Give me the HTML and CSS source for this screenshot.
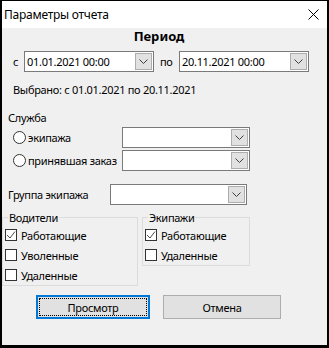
FILE: index.html
```html
<!DOCTYPE html>
<html lang="ru">
<head>
<meta charset="utf-8">
<title>Параметры отчета</title>
<link rel="stylesheet" href="styles.css">
</head>
<body>
<div class="window">
  <div class="titlebar">
    <span class="title">Параметры отчета</span>
    <svg class="close" width="11" height="11" viewBox="0 0 11 11"><path d="M0.5 0.5 L10.5 10.5 M10.5 0.5 L0.5 10.5" stroke="#000" stroke-width="1" fill="none"/></svg>
  </div>
  <div class="content">
    <div class="heading">Период</div>
    <div class="date-row">
      <span class="lbl-from">с</span>
      <div class="combo date-combo"><span class="val">01.01.2021 00:00</span><span class="btn"><svg width="9" height="5" viewBox="0 0 9 5"><path d="M0.5 0.5 L4.5 4.5 L8.5 0.5" stroke="#404040" fill="none"/></svg></span></div>
      <span class="lbl-to">по</span>
      <div class="combo date-combo"><span class="val">20.11.2021 00:00</span><span class="btn"><svg width="9" height="5" viewBox="0 0 9 5"><path d="M0.5 0.5 L4.5 4.5 L8.5 0.5" stroke="#404040" fill="none"/></svg></span></div>
    </div>
    <div class="selected">Выбрано: с 01.01.2021 по 20.11.2021</div>
    <div class="section">Служба</div>
    <div class="radio-row first">
      <label class="radio-label"><span class="radio"></span>экипажа</label>
      <div class="combo svc-combo"><span class="val"></span><span class="btn"><svg width="9" height="5" viewBox="0 0 9 5"><path d="M0.5 0.5 L4.5 4.5 L8.5 0.5" stroke="#404040" fill="none"/></svg></span></div>
    </div>
    <div class="radio-row">
      <label class="radio-label"><span class="radio"></span>принявшая заказ</label>
      <div class="combo svc-combo"><span class="val"></span><span class="btn"><svg width="9" height="5" viewBox="0 0 9 5"><path d="M0.5 0.5 L4.5 4.5 L8.5 0.5" stroke="#404040" fill="none"/></svg></span></div>
    </div>
    <div class="group-row">
      <span class="group-label">Группа экипажа</span>
      <div class="combo group-combo"><span class="val"></span><span class="btn"><svg width="9" height="5" viewBox="0 0 9 5"><path d="M0.5 0.5 L4.5 4.5 L8.5 0.5" stroke="#404040" fill="none"/></svg></span></div>
    </div>
    <div class="boxes">
      <fieldset class="box drivers">
        <legend>Водители</legend>
        <div class="check-row"><span class="check on"><svg width="10" height="10" viewBox="0 0 10 10"><path d="M1 5 L4 8 L9 1.5" stroke="#4d4d4d" stroke-width="1" fill="none"/></svg></span>Работающие</div>
        <div class="check-row"><span class="check"></span>Уволенные</div>
        <div class="check-row"><span class="check"></span>Удаленные</div>
      </fieldset>
      <fieldset class="box crews">
        <legend>Экипажи</legend>
        <div class="check-row"><span class="check on"><svg width="10" height="10" viewBox="0 0 10 10"><path d="M1 5 L4 8 L9 1.5" stroke="#4d4d4d" stroke-width="1" fill="none"/></svg></span>Работающие</div>
        <div class="check-row"><span class="check"></span>Удаленные</div>
      </fieldset>
    </div>
    <div class="buttons">
      <div class="button primary"><span class="focus">Просмотр</span></div>
      <div class="button cancel">Отмена</div>
    </div>
  </div>
</div>
</body>
</html>
```
FILE: styles.css
```css
* { box-sizing: border-box; }
html, body { margin: 0; padding: 0; background: #000; }
body {
  font-family: "Noto Sans", "Liberation Sans", sans-serif;
  font-size: 11px;
  letter-spacing: -0.3px;
  color: #000;
}
.window {
  width: 329px;
  height: 348px;
  border-style: solid;
  border-color: #000;
  border-width: 1px 2px 3px 2px;
  background: #f0f0f0;
  overflow: hidden;
}
.titlebar {
  height: 27px;
  background: #fff;
  display: flex;
  align-items: center;
  padding-left: 2px;
  padding-right: 8px;
}
.title { font-size: 12px; letter-spacing: -0.25px; flex: 1; }
.close { display: block; }
.heading {
  height: 16px;
  line-height: 16px;
  font-weight: bold;
  font-size: 13px;
  letter-spacing: 0;
  text-align: center;
  padding-right: 11px;
}
.date-row {
  display: flex;
  align-items: center;
  margin-top: 7px;
  height: 21px;
}
.lbl-from { width: 22px; padding-left: 11px; }
.lbl-to { width: 25px; padding-left: 6px; }
.combo {
  height: 21px;
  border: 1px solid #7a7a7a;
  background: #fff;
  display: flex;
  align-items: stretch;
  padding: 1px;
}
.combo .val { flex: 1; line-height: 17px; padding-left: 1px; white-space: nowrap; overflow: hidden; }
.combo .btn {
  width: 17px;
  background: #e1e1e1;
  border: 1px solid #adadad;
  display: flex;
  align-items: center;
  justify-content: center;
}
.combo .btn svg { display: block; }
.date-combo { width: 130px; }
.selected { margin-top: 10px; line-height: 15px; padding-left: 11px; }
.section { margin-top: 13px; line-height: 15px; padding-left: 6px; }
.radio-row { display: flex; align-items: center; margin-top: 2px; height: 21px; }
.radio-label { width: 120px; display: flex; align-items: center; padding-left: 11px; gap: 2px; }
.radio {
  width: 13px; height: 13px;
  border: 1px solid #333;
  border-radius: 50%;
  background: #fff;
  flex: none;
}
.svc-combo { width: 128px; }
.group-row { display: flex; align-items: center; margin-top: 13px; height: 21px; }
.group-label { width: 108px; padding-left: 6px; }
.group-combo { width: 137px; }
.boxes { display: flex; align-items: flex-start; margin-top: 5px; gap: 4px; }
.box {
  margin: 0;
  border: 1px solid #dcdcdc;
  padding: 0 0 0 2px;
  min-width: 0;
}
.box legend { padding: 0 1px; line-height: 15px; margin-left: 3px; }
.drivers { width: 136px; height: 76px; }
.crews { width: 108px; height: 56px; }
.check-row { display: flex; align-items: center; height: 20px; gap: 4px; }
.check {
  width: 12px; height: 12px;
  border: 1px solid #333;
  background: #fff;
  flex: none;
  display: flex; align-items: center; justify-content: center;
}
.check svg { display: block; }
.buttons { display: flex; margin-top: 9px; padding-left: 34px; gap: 13px; }
.button {
  height: 24px;
  background: #e1e1e1;
  border: 1px solid #adadad;
  display: flex; align-items: center; justify-content: center;
}
.primary { width: 114px; border: 2px solid #0078d7; padding: 1px; }
.primary .focus { flex: 1; align-self: stretch; display: flex; align-items: center; justify-content: center; border: 1px dotted #000; }
.cancel { width: 118px; }
```
